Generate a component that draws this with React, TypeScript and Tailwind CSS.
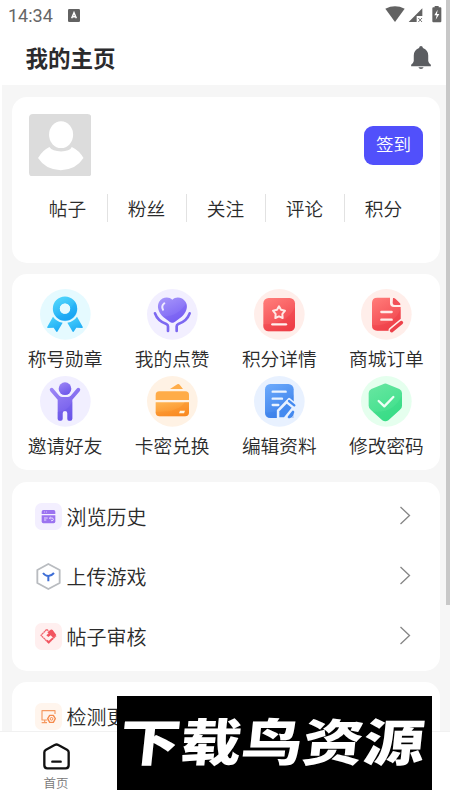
import type { ReactNode } from "react";

const FONT = "font-['Roboto','Noto_Sans_CJK_SC',sans-serif]";

const STATS = ["帖子", "粉丝", "关注", "评论", "积分"];

const SHORTCUTS: { label: string; icon: ReactNode }[] = [
  { label: "称号勋章", icon: <MedalIcon /> },
  { label: "我的点赞", icon: <HeartIcon /> },
  { label: "积分详情", icon: <PointsIcon /> },
  { label: "商城订单", icon: <OrderIcon /> },
  { label: "邀请好友", icon: <InviteIcon /> },
  { label: "卡密兑换", icon: <WalletIcon /> },
  { label: "编辑资料", icon: <EditIcon /> },
  { label: "修改密码", icon: <ShieldIcon /> },
];

function Gradient({ id, from, to }: { id: string; from: string; to: string }) {
  return (
    <linearGradient id={id} x1="0.2" y1="0" x2="0.7" y2="1">
      <stop offset="0" stopColor={from} />
      <stop offset="1" stopColor={to} />
    </linearGradient>
  );
}

function Disc({ fill, children }: { fill: string; children: ReactNode }) {
  return (
    <svg viewBox="0 0 153 153" className="size-[51px]" fill="none" strokeLinecap="round" strokeLinejoin="round">
      <circle cx="76" cy="76" r="76" fill={fill} />
      {children}
    </svg>
  );
}

function MedalIcon() {
  return (
    <Disc fill="#e5faff">
      <defs><Gradient id="medal" from="#4ad0fb" to="#1ba9f5" /></defs>
      <path d="M39 83Q48 97 68 101L52 128Q50 130 48 127L41 116L24 117Q20 117 22 113Z" fill="url(#medal)" />
      <path d="M111 83Q102 97 82 101L98 128Q100 130 102 127L109 116L126 117Q130 117 128 113Z" fill="url(#medal)" />
      <circle cx="75" cy="59" r="26" stroke="url(#medal)" strokeWidth="21" />
      <path d="M105 39A36 36 0 0 1 47 82Q78 79 91 60Q98 50 105 39Z" fill="#169ff2" opacity=".25" />
      <circle cx="75" cy="59" r="15.5" fill="#e5faff" />
    </Disc>
  );
}

function HeartIcon() {
  return (
    <Disc fill="#f2efff">
      <defs><Gradient id="heart" from="#a594fa" to="#775ff4" /></defs>
      <path d="M76 32C65 22 45 24 36 39C28 54 36 72 48 83L68 98Q76 104 84 98L104 83C117 72 125 54 116 39C106 24 87 22 76 32Z" fill="url(#heart)" />
      <path d="M118 43C120 58 114 72 104 83L84 98Q76 104 68 98L48 83Q93 83 118 43Z" fill="#6f57f0" opacity=".3" />
      <path d="M52 43Q42 51 48 62" stroke="#eeeaff" strokeWidth="6" />
      <path d="M24 73Q32 96 58 105Q63 107 63 112V126M128 73Q120 96 94 105Q89 107 89 112V126" stroke="#7c68f1" strokeWidth="8" />
    </Disc>
  );
}

function PointsIcon() {
  return (
    <Disc fill="#ffeeea">
      <defs><Gradient id="points" from="#ff7b78" to="#f0424b" /></defs>
      <rect x="28" y="27" width="95" height="100" rx="16" fill="url(#points)" />
      <path d="M123 55V111Q123 127 107 127H44Q28 127 28 111V106Q98 107 123 55Z" fill="#eb343e" opacity=".3" />
      <path d="M75 52L81 62L93 65L85 75L86 87L75 82L64 87L65 75L57 65L69 62Z" stroke="#ffe9e6" strokeWidth="6" />
      <path d="M55 106H96" stroke="#fff0ee" strokeWidth="7" />
    </Disc>
  );
}

function OrderIcon() {
  return (
    <Disc fill="#ffeeea">
      <defs><Gradient id="order" from="#ff7977" to="#f0424b" /></defs>
      <path d="M49 26H87V42Q87 54 99 54H119V94L88 125H49Q33 125 33 109V42Q33 26 49 26Z" fill="url(#order)" />
      <path d="M119 59V94L88 125H49Q33 125 33 109Q99 111 119 59Z" fill="#eb343e" opacity=".3" />
      <path d="M96 27Q100 26 104 30L117 43Q120 47 117 48H101Q95 48 95 42Z" fill="#f25057" />
      <path d="M61 69H92M61 92H92" stroke="#ffece9" strokeWidth="7" />
      <path d="M93 124L122 100" stroke="#ffeeea" strokeWidth="20" />
      <path d="M92 125L121 101" stroke="#ed414a" strokeWidth="11" />
    </Disc>
  );
}

function InviteIcon() {
  return (
    <Disc fill="#f1efff">
      <defs><Gradient id="invite" from="#9b84f5" to="#6c56ea" /></defs>
      <circle cx="75" cy="38" r="19" fill="url(#invite)" />
      <path d="M31 46Q27 41 31 37Q36 33 40 38L58 59Q62 63 68 63H82Q88 63 92 59L110 38Q114 33 119 37Q123 41 119 46L97 71V128Q97 134 91 134H87Q82 134 82 128V112Q82 105 75 105Q68 105 68 112V128Q68 134 62 134H59Q53 134 53 128V71Z" fill="url(#invite)" />
      <path d="M97 77V128Q97 134 91 134H87Q82 134 82 128V112Q82 105 75 105Q68 105 68 112V128Q68 134 62 134H59Q53 134 53 128V108Q84 106 97 77Z" fill="#5d4be2" opacity=".25" />
    </Disc>
  );
}

function WalletIcon() {
  return (
    <Disc fill="#fff2e4">
      <defs><Gradient id="wallet" from="#ffb24e" to="#fa8c23" /></defs>
      <path d="M69 39L91 25Q95 22 98 26L108 39Z" fill="#ffad4a" />
      <path d="M26 72V57Q26 46 37 46H115Q126 46 126 57V72Z" fill="#ffac48" />
      <path d="M26 79H126V109Q126 121 114 121H38Q26 121 26 109Z" fill="url(#wallet)" />
      <path d="M126 79V109Q126 121 114 121H38Q26 121 26 109V107Q92 111 113 79Z" fill="#f8851e" opacity=".3" />
      <path d="M99 104H114L111 112H96Z" fill="#fff4df" />
    </Disc>
  );
}

function EditIcon() {
  return (
    <Disc fill="#e8f1ff">
      <defs><Gradient id="edit" from="#6aa8fb" to="#397ee9" /></defs>
      <rect x="33" y="24" width="86" height="102" rx="16" fill="url(#edit)" />
      <path d="M119 54V126H49Q33 126 33 110Q101 110 119 54Z" fill="#347be8" opacity=".3" />
      <path d="M56 47H95M56 68H84M56 87H73" stroke="#eaf3ff" strokeWidth="7" />
      <path d="M72 130V104L105 69L130 90L98 130Z" fill="#e8f1ff" stroke="#e8f1ff" strokeWidth="7" />
      <path d="M76 124V106L98 83L113 95L90 124Z" fill="#448af0" />
      <path d="M105 75L121 88" stroke="#448af0" strokeWidth="7" />
      <path d="M105 123L117 108" stroke="#448af0" strokeWidth="8" />
    </Disc>
  );
}

function ShieldIcon() {
  return (
    <Disc fill="#e5ffee">
      <defs><Gradient id="shield" from="#66e6a0" to="#3bdf89" /></defs>
      <path d="M66 25Q73 20 80 25L115 39Q123 43 123 51V89Q123 97 116 102L82 133Q73 139 64 133L30 102Q23 97 23 89V51Q23 43 31 39Z" fill="url(#shield)" />
      <path d="M123 60V89Q123 97 116 102L82 133Q73 139 64 133L35 107Q95 113 123 60Z" fill="#29d27b" opacity=".25" />
      <path d="M53 75L70 91L97 63" stroke="#effff5" strokeWidth="7" />
    </Disc>
  );
}

function HistoryIcon() {
  return (
    <svg viewBox="0 0 81 81" className="size-[27px]" fill="none">
      <rect width="81" height="81" rx="20" fill="#f3efff" />
      <path d="M25 21H56Q61 21 61 26V33H20V26Q20 21 25 21Z" fill="#9b73f0" />
      <path d="M20 37H61V55Q61 61 56 61H25Q20 61 20 55Z" fill="#9b73f0" />
      <path d="M27 27H29M33 27H35" stroke="#eee5ff" strokeWidth="3" />
      <path d="M27 45H38M27 51H34M45 45H51Q55 45 55 49T51 53H48M47 42L43 45L47 49" stroke="#e8dcff" strokeWidth="3" />
    </svg>
  );
}

function UploadIcon() {
  return (
    <svg viewBox="0 0 81 81" className="size-[27px]" fill="none">
      <path d="M40 3L74 21V60L40 78L7 60V21Z" stroke="#b9bcc0" strokeWidth="5.5" strokeLinejoin="round" />
      <path d="M24 30Q31 39 40 39Q49 39 57 30M40 39V55" stroke="#3e6ed6" strokeWidth="6" />
    </svg>
  );
}

function ReviewIcon() {
  return (
    <svg viewBox="0 0 81 81" className="size-[27px]" fill="none">
      <rect width="81" height="81" rx="20" fill="#ffefef" />
      <path d="M40 23L35 19L18 37L41 60L63 38" stroke="#f16570" strokeWidth="4" strokeLinejoin="round" strokeDasharray="6 1" />
      <path d="M37 28L47 20Q50 18 53 21L64 36L55 45L47 37L40 42L34 37L41 31Z" fill="#f2545f" />
      <path d="M36 52L41 57L54 45" stroke="#f2545f" strokeWidth="5" />
    </svg>
  );
}

function UpdateIcon() {
  return (
    <svg viewBox="0 0 81 81" className="size-[27px]" fill="none">
      <rect width="81" height="81" rx="20" fill="#fff5ed" />
      <path d="M37 51H21V23H60V33M20 59H36M29 51V58" stroke="#f59a62" strokeWidth="3.5" strokeLinejoin="round" />
      <path d="M44 37H55L61 47L55 58H44L38 47Z" stroke="#f58b4d" strokeWidth="4" strokeLinejoin="round" />
      <circle cx="49.5" cy="47.5" r="4" stroke="#f58b4d" strokeWidth="3" />
    </svg>
  );
}

function StatusBar() {
  return (
    <div className="flex h-8 shrink-0 items-center justify-between px-2 text-[#666]">
      <div className="flex items-center gap-[15px]">
        <span className="text-[18px] leading-8">14:34</span>
        <svg viewBox="0 0 36 39" className="-mt-0.5 h-[13px] w-3">
          <rect width="36" height="39" rx="4" fill="#626262" />
          <path d="M11 28L18 11L25 28M14 23H22" stroke="#fff" strokeWidth="4.5" fill="none" />
        </svg>
      </div>
      <svg viewBox="0 0 171 54" className="-mt-0.5 h-[18px] w-[57px]" fill="#626262">
        <path d="M1 8Q30 -6 59 8L30 48Z" />
        <path d="M71 48L112 7V30H95V48Z" />
        <path d="M100 36L111 48M111 36L100 48" stroke="#777" strokeWidth="3" />
        <path d="M149 0H161V4H166Q169 4 169 7V46Q169 49 166 49H145Q142 49 142 46V7Q142 4 145 4H149Z" />
        <path d="M158 11L148 28H155L152 41L163 24H156Z" fill="#fff" />
      </svg>
    </div>
  );
}

function Card({ className, children }: { className: string; children: ReactNode }) {
  return <section className={`shrink-0 rounded-[15px] bg-white ${className}`}>{children}</section>;
}

function MenuRow({ icon, label }: { icon: ReactNode; label: string }) {
  return (
    <div className="flex h-[60px] items-center pl-[23.5px] pr-[29px]">
      {icon}
      <span className="ml-[4.5px] flex-1 pt-[3px] text-[20px] font-[350] leading-[28px] text-[#2b2b2b]">{label}</span>
      <svg viewBox="0 0 12 20" className="h-5 w-3" fill="none" stroke="#858585" strokeWidth="1.3">
        <path d="M1.5 1L10.5 9.5L1.5 18" />
      </svg>
    </div>
  );
}

export default function App() {
  return (
    <div className={`relative flex h-[800px] w-[450px] flex-col overflow-hidden bg-white ${FONT}`}>
      <StatusBar />
      <header className="flex h-[53px] shrink-0 items-center justify-between pl-[25.5px] pr-[19px]">
        <h1 className="pt-0.5 text-[22.5px] font-bold leading-[53px] text-[#2b2b2d]">我的主页</h1>
        <svg viewBox="0 0 60 70" className="-mt-[3px] h-[23px] w-5" fill="#5b5d61">
          <path d="M30 0Q35 0 36 6Q52 12 52 29V46Q53 53 60 57V62H0V57Q7 53 8 46V29Q8 12 24 6Q25 0 30 0ZM22 65H38Q36 70 30 70T22 65Z" />
        </svg>
      </header>

      <main className="ml-0.5 flex min-h-0 flex-1 flex-col gap-[11.5px] overflow-hidden bg-[#f6f6f6] pl-[9.5px] pr-[10px] pt-[11.5px]">
        <Card className="h-[166px] px-[17px] pt-[17px]">
          <div className="flex justify-between">
            <svg viewBox="0 0 187 187" className="size-[62.5px]">
              <rect width="187" height="187" rx="12" fill="#dcdcdc" />
              <ellipse cx="96" cy="62" rx="36" ry="40" fill="#fff" />
              <path d="M61 99Q70 112 96 112T128 99Q151 110 163 132Q140 168 95 168T27 132Q40 109 61 99Z" fill="#fff" />
            </svg>
            <button className="mt-[12px] h-[39px] w-[59px] rounded-[9px] bg-[#5150fb] text-[17.5px] font-[350] text-white">
              签到
            </button>
          </div>
          <div className="mt-[17.5px] flex w-[394px] divide-x divide-[#e2e2e2]">
            {STATS.map((label) => (
              <span key={label} className="h-7 flex-1 text-center text-[18.7px] font-[350] leading-[32px] text-[#2b2b2b]">
                {label}
              </span>
            ))}
          </div>
        </Card>

        <Card className="grid h-[196px] grid-cols-4 grid-rows-[87px_87px] pt-[14.5px]">
          {SHORTCUTS.map((s) => (
            <div key={s.label} className="flex flex-col items-center">
              {s.icon}
              <span className="mt-[7.5px] whitespace-nowrap text-[18.7px] font-[350] leading-[26px] text-[#2b2b2b]">
                {s.label}
              </span>
            </div>
          ))}
        </Card>

        <Card className="h-[189px] pt-[4.5px]">
          <MenuRow icon={<HistoryIcon />} label="浏览历史" />
          <MenuRow icon={<UploadIcon />} label="上传游戏" />
          <MenuRow icon={<ReviewIcon />} label="帖子审核" />
        </Card>

        <Card className="h-[189px] pt-[4.5px]">
          <MenuRow icon={<UpdateIcon />} label="检测更新" />
        </Card>
      </main>

      <nav className="flex h-[69px] shrink-0 border-t border-[#f1f1f1] bg-white">
        <div className="flex w-28 flex-col items-center pt-[11px]">
          <svg viewBox="0 0 81 81" className="size-[27px]" fill="none" stroke="#111" strokeLinecap="round" strokeLinejoin="round">
            <path d="M4 28Q4 23 9 20L35 6Q41 3 46 6L72 20Q77 23 77 28V67Q77 76 68 76H13Q4 76 4 67Z" strokeWidth="7" />
            <path d="M28 56H53" strokeWidth="7" />
          </svg>
          <span className="mt-1 text-[12.5px] font-[350] leading-[20px] text-[#777]">首页</span>
        </div>
      </nav>

      <div className="absolute right-0 top-0 h-[605px] w-1 bg-[#c8c8c8]" />

      <div className="absolute left-[117px] top-[696px] flex h-[94px] w-[315px] items-center justify-center bg-black pr-1 pt-0.5">
        <span className="-skew-x-5 scale-x-[1.27] scale-y-[1.05] whitespace-nowrap text-[48px] font-black leading-none text-white">
          下载鸟资源
        </span>
      </div>
    </div>
  );
}
